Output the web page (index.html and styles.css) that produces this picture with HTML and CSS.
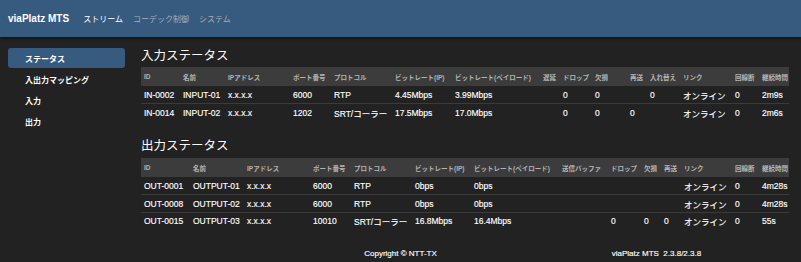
FILE: index.html
```html
<!DOCTYPE html>
<html lang="ja">

<head>
    <meta charset="UTF-8">
    <meta name="viewport" content="width=device-width, initial-scale=1.0">
    <title>viaPlatz MTS</title>
    <link rel="stylesheet" href="styles.css">
</head>

<body>
    <header class="navbar">
        <span class="brand">viaPlatz MTS</span>
        <nav class="nav">
            <a class="nav-link active" href="#">ストリーム</a>
            <a class="nav-link" href="#">コーデック制御</a>
            <a class="nav-link" href="#">システム</a>
        </nav>
    </header>

    <div class="layout">
        <aside class="sidebar">
            <a class="side-item active" href="#">ステータス</a>
            <a class="side-item" href="#">入出力マッピング</a>
            <a class="side-item" href="#">入力</a>
            <a class="side-item" href="#">出力</a>
        </aside>

        <main class="content">
            <section class="status">
                <h2 class="status-title">入力ステータス</h2>
                <table class="status-table in-table">
                    <colgroup>
                        <col><col><col><col><col><col><col><col><col><col><col><col><col><col><col>
                    </colgroup>
                    <thead>
                        <tr>
                            <th>ID</th><th>名前</th><th>IPアドレス</th><th>ポート番号</th><th>プロトコル</th>
                            <th>ビットレート(IP)</th><th>ビットレート(ペイロード)</th><th>遅延</th><th>ドロップ</th>
                            <th>欠損</th><th>再送</th><th>入れ替え</th><th>リンク</th><th>回線断</th><th>継続時間</th>
                        </tr>
                    </thead>
                    <tbody>
                        <tr>
                            <td>IN-0002</td><td>INPUT-01</td><td>x.x.x.x</td><td>6000</td><td>RTP</td>
                            <td>4.45Mbps</td><td>3.99Mbps</td><td></td><td>0</td>
                            <td>0</td><td></td><td>0</td><td>オンライン</td><td>0</td><td>2m9s</td>
                        </tr>
                        <tr>
                            <td>IN-0014</td><td>INPUT-02</td><td>x.x.x.x</td><td>1202</td><td>SRT/コーラー</td>
                            <td>17.5Mbps</td><td>17.0Mbps</td><td></td><td>0</td>
                            <td>0</td><td>0</td><td></td><td>オンライン</td><td>0</td><td>2m6s</td>
                        </tr>
                    </tbody>
                </table>
            </section>

            <section class="status">
                <h2 class="status-title">出力ステータス</h2>
                <table class="status-table out-table">
                    <colgroup>
                        <col><col><col><col><col><col><col><col><col><col><col><col><col><col>
                    </colgroup>
                    <thead>
                        <tr>
                            <th>ID</th><th>名前</th><th>IPアドレス</th><th>ポート番号</th><th>プロトコル</th>
                            <th>ビットレート(IP)</th><th>ビットレート(ペイロード)</th><th>送信バッファ</th><th>ドロップ</th>
                            <th>欠損</th><th>再送</th><th>リンク</th><th>回線断</th><th>継続時間</th>
                        </tr>
                    </thead>
                    <tbody>
                        <tr>
                            <td>OUT-0001</td><td>OUTPUT-01</td><td>x.x.x.x</td><td>6000</td><td>RTP</td>
                            <td>0bps</td><td>0bps</td><td></td><td></td>
                            <td></td><td></td><td>オンライン</td><td>0</td><td>4m28s</td>
                        </tr>
                        <tr>
                            <td>OUT-0008</td><td>OUTPUT-02</td><td>x.x.x.x</td><td>6000</td><td>RTP</td>
                            <td>0bps</td><td>0bps</td><td></td><td></td>
                            <td></td><td></td><td>オンライン</td><td>0</td><td>4m28s</td>
                        </tr>
                        <tr>
                            <td>OUT-0015</td><td>OUTPUT-03</td><td>x.x.x.x</td><td>10010</td><td>SRT/コーラー</td>
                            <td>16.8Mbps</td><td>16.4Mbps</td><td></td><td>0</td>
                            <td>0</td><td>0</td><td>オンライン</td><td>0</td><td>55s</td>
                        </tr>
                    </tbody>
                </table>
            </section>
        </main>
    </div>

    <footer class="footer">
        <span class="copyright">Copyright © NTT-TX</span>
        <span class="version">viaPlatz MTS&nbsp; 2.3.8/2.3.8</span>
    </footer>
</body>

</html>
```

FILE: styles.css
```css
* {
    margin: 0;
    padding: 0;
    box-sizing: border-box;
}

body {
    background-color: #222222;
    color: #ffffff;
    font-family: "Liberation Sans", "Noto Sans CJK JP", sans-serif;
    font-size: 8.5px;
}

a {
    color: inherit;
    text-decoration: none;
}

/* top bar */
.navbar {
    display: flex;
    align-items: center;
    height: 37px;
    padding: 0 8px;
    background-color: #375a7f;
    box-shadow: 0 1px 3px rgba(0, 0, 0, 0.6);
}

.brand {
    font-size: 10px;
    font-weight: bold;
    margin-right: 14px;
}

.nav {
    display: flex;
    gap: 10px;
}

.nav-link {
    font-size: 8px;
    color: #a3adb8;
}

.nav-link.active {
    color: #ffffff;
}

/* page body */
.layout {
    display: flex;
    gap: 16px;
    padding: 11px 12px 0 8px;
}

.sidebar {
    display: flex;
    flex-direction: column;
    gap: 1px;
    width: 117px;
    flex-shrink: 0;
}

.side-item {
    display: flex;
    align-items: center;
    height: 20px;
    padding-left: 17px;
    font-size: 8px;
    font-weight: bold;
    border-radius: 3px;
}

.side-item.active {
    background-color: #375a7f;
}

.content {
    flex: 1;
    padding-top: 1px;
}

.status + .status {
    margin-top: 18px;
}

.status-title {
    font-size: 12.5px;
    font-weight: normal;
    line-height: 14px;
    margin-bottom: 4px;
}

.status + .status .status-title {
    margin-bottom: 5px;
}

/* tables */
.status-table {
    width: 100%;
    table-layout: fixed;
    border-collapse: collapse;
}

.status-table th,
.status-table td {
    padding: 0 3px;
    text-align: left;
    white-space: nowrap;
    overflow: hidden;
}

.status-table th {
    height: 19px;
    background-color: #3c3c3c;
    color: #b4b4b4;
    font-size: 6.5px;
    font-weight: bold;
}

.status-table td {
    height: 17.6px;
    border-top: 1px solid #3a3a3a;
    -webkit-text-stroke: 0.15px #ffffff;
}

.status-table tbody tr:first-child td {
    border-top: none;
}

.in-table col:nth-child(1) { width: 39px; }
.in-table col:nth-child(2) { width: 45px; }
.in-table col:nth-child(3) { width: 65px; }
.in-table col:nth-child(4) { width: 41px; }
.in-table col:nth-child(5) { width: 61px; }
.in-table col:nth-child(6) { width: 60px; }
.in-table col:nth-child(7) { width: 88px; }
.in-table col:nth-child(8) { width: 20px; }
.in-table col:nth-child(9) { width: 32px; }
.in-table col:nth-child(10) { width: 35px; }
.in-table col:nth-child(11) { width: 20px; }
.in-table col:nth-child(12) { width: 33px; }
.in-table col:nth-child(13) { width: 52px; }
.in-table col:nth-child(14) { width: 27px; }
.in-table col:nth-child(15) { width: 30px; }

.out-table col:nth-child(1) { width: 49px; }
.out-table col:nth-child(2) { width: 54px; }
.out-table col:nth-child(3) { width: 66px; }
.out-table col:nth-child(4) { width: 41px; }
.out-table col:nth-child(5) { width: 61px; }
.out-table col:nth-child(6) { width: 59px; }
.out-table col:nth-child(7) { width: 88px; }
.out-table col:nth-child(8) { width: 49px; }
.out-table col:nth-child(9) { width: 33px; }
.out-table col:nth-child(10) { width: 20px; }
.out-table col:nth-child(11) { width: 20px; }
.out-table col:nth-child(12) { width: 51px; }
.out-table col:nth-child(13) { width: 27px; }
.out-table col:nth-child(14) { width: 30px; }

/* footer */
.footer {
    display: grid;
    grid-template-columns: 1fr auto 1fr;
    margin-top: 18px;
    font-size: 8px;
    line-height: 12px;
    -webkit-text-stroke: 0.15px #ffffff;
}

.copyright {
    grid-column: 2;
}

.version {
    grid-column: 3;
    padding-left: 175px;
}
```
